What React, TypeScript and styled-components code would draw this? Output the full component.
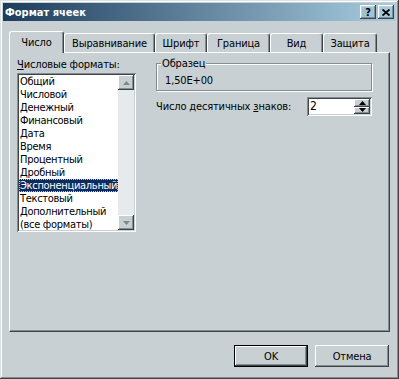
import styled, { createGlobalStyle, css } from 'styled-components';

const face = '#c8d0d4';
const light = '#ffffff';
const shadow = '#848c94';
const dark = '#3c4448';

const GlobalStyle = createGlobalStyle`
  html, body { margin: 0; padding: 0; background: ${face}; }
  body {
    font-family: "DejaVu Sans Condensed", "Liberation Sans", sans-serif;
    font-size: 11px;
    letter-spacing: -0.15px;
    color: #000;
  }
  * { box-sizing: border-box; }
`;

const raised = css`
  box-shadow: inset -1px -1px ${dark}, inset 1px 1px ${light},
    inset -2px -2px ${shadow}, inset 2px 2px ${face};
`;

const sunken = css`
  box-shadow: inset 1px 1px ${shadow}, inset -1px -1px ${light},
    inset 2px 2px ${dark}, inset -2px -2px ${face};
`;

const Window = styled.div`
  width: 399px;
  height: 379px;
  padding: 3px;
  display: flex;
  flex-direction: column;
  background: ${face};
  box-shadow: inset -1px -1px #404448, inset 1px 1px #dde2e5,
    inset -2px -2px ${shadow}, inset 2px 2px ${light};
`;

const TitleBar = styled.div`
  height: 18px;
  display: flex;
  align-items: center;
  justify-content: space-between;
  padding: 0 2px;
  background: linear-gradient(to right, #1d3c5c, #a8cde0);
  color: #fff;
  font-weight: bold;
  letter-spacing: 0;
`;

const TitleButtons = styled.div`
  display: flex;
  gap: 2px;
`;

const TitleButton = styled.div`
  width: 16px;
  height: 14px;
  display: flex;
  align-items: center;
  justify-content: center;
  color: #000;
  font-weight: bold;
  font-size: 11px;
  ${raised};
`;

const Body = styled.div`
  flex: 1;
  display: flex;
  flex-direction: column;
  padding: 10px 6px 0 6px;
`;

const TabRow = styled.div`
  display: flex;
  align-items: flex-end;
  height: 22px;
  margin-bottom: -1px;
  position: relative;
  z-index: 1;
`;

const Tab = styled.div<{ $w: number; $active?: boolean }>`
  width: ${(p) => p.$w}px;
  height: ${(p) => (p.$active ? 22 : 19)}px;
  margin-bottom: ${(p) => (p.$active ? 0 : 1)}px;
  padding-bottom: ${(p) => (p.$active ? 1 : 0)}px;
  display: flex;
  align-items: center;
  justify-content: center;
  background: ${face};
  border-top: 1px solid ${light};
  border-left: 1px solid ${light};
  border-right: 1px solid ${dark};
  border-radius: 3px 3px 0 0;
  box-shadow: inset -1px 0 ${shadow};
  white-space: nowrap;
`;

const Panel = styled.div`
  height: 280px;
  display: flex;
  align-items: flex-start;
  gap: 20px;
  padding: 5px 7px;
  border-top: 1px solid ${light};
  border-left: 1px solid ${light};
  border-right: 1px solid ${dark};
  border-bottom: 1px solid ${dark};
  box-shadow: inset -1px -1px ${shadow};
`;

const LeftCol = styled.div`
  width: 119px;
  display: flex;
  flex-direction: column;
  gap: 2px;
`;

const Label = styled.div`
  line-height: 13px;
  height: 13px;
  white-space: nowrap;
`;

const ListBox = styled.div`
  height: 159px;
  padding: 2px;
  display: flex;
  background: #fff;
  ${sunken};
`;

const Items = styled.div`
  flex: 1;
  overflow: hidden;
`;

const Item = styled.div<{ $selected?: boolean }>`
  height: 13px;
  line-height: 13px;
  padding-left: 1px;
  letter-spacing: -0.3px;
  white-space: nowrap;
  background: ${(p) => (p.$selected ? '#0f2a5c' : 'transparent')};
  color: ${(p) => (p.$selected ? '#fff' : '#000')};
  outline: ${(p) => (p.$selected ? '1px dotted #d8c88c' : 'none')};
  outline-offset: -1px;
`;

const ScrollBar = styled.div`
  width: 16px;
  display: flex;
  flex-direction: column;
  justify-content: space-between;
  background: #e6eaec;
`;

const ArrowButton = styled.div<{ $h: number }>`
  height: ${(p) => p.$h}px;
  display: flex;
  align-items: center;
  justify-content: center;
  background: ${face};
  ${raised};
`;

const RightCol = styled.div`
  width: 216px;
  display: flex;
  flex-direction: column;
  gap: 6px;
`;

const Group = styled.fieldset`
  margin: -1px 0 0 0;
  padding: 0 0 3px 8px;
  border: 1px solid ${shadow};
  box-shadow: 1px 1px 0 ${light}, inset 1px 1px 0 ${light};
  min-width: 0;
`;

const Legend = styled.legend`
  margin-left: -4px;
  padding: 0 1px;
  line-height: 13px;
  background: ${face};
`;

const SampleValue = styled.div`
  padding-top: 4px;
  line-height: 13px;
`;

const SpinRow = styled.div`
  display: flex;
  align-items: center;
  justify-content: space-between;
  height: 19px;
`;

const SpinBox = styled.div`
  width: 65px;
  height: 19px;
  padding: 2px;
  display: flex;
  background: #fff;
  ${sunken};
`;

const SpinValue = styled.div`
  flex: 1;
  padding-left: 1px;
  line-height: 15px;
  font-size: 12px;
`;

const SpinButtons = styled.div`
  width: 16px;
  display: flex;
  flex-direction: column;
`;

const SpinButton = styled.div`
  flex: 1;
  display: flex;
  align-items: center;
  justify-content: center;
  background: ${face};
  ${raised};
`;

const Footer = styled.div`
  display: flex;
  justify-content: flex-end;
  gap: 7px;
  margin-top: 13px;
  padding-right: 1px;
`;

const Button = styled.div<{ $default?: boolean }>`
  width: 74px;
  height: 22px;
  display: flex;
  align-items: center;
  justify-content: center;
  background: ${face};
  ${(p) =>
    p.$default
      ? css`
          border: 1px solid #000;
          box-shadow: inset -1px -1px ${dark}, inset 1px 1px ${light},
            inset -2px -2px ${shadow};
        `
      : raised};
`;

const Tri = ({ up, color }: { up: boolean; color: string }) => (
  <svg width="7" height="4" viewBox="0 0 7 4">
    <path d={up ? 'M3.5 0 L7 4 L0 4 Z' : 'M0 0 L7 0 L3.5 4 Z'} fill={color} />
  </svg>
);

const formats = [
  'Общий',
  'Числовой',
  'Денежный',
  'Финансовый',
  'Дата',
  'Время',
  'Процентный',
  'Дробный',
  'Экспоненциальный',
  'Текстовый',
  'Дополнительный',
  '(все форматы)',
];

const tabs = [
  { name: 'Число', w: 55 },
  { name: 'Выравнивание', w: 91 },
  { name: 'Шрифт', w: 52 },
  { name: 'Граница', w: 63 },
  { name: 'Вид', w: 53 },
  { name: 'Защита', w: 54 },
];

export default function App() {
  return (
    <>
      <GlobalStyle />
      <Window>
        <TitleBar>
          <span>Формат ячеек</span>
          <TitleButtons>
            <TitleButton>?</TitleButton>
            <TitleButton>
              <svg width="8" height="7" viewBox="0 0 8 7">
                <path d="M0.5 0.5 L7.5 6.5 M7.5 0.5 L0.5 6.5" stroke="#000" strokeWidth="1.8" />
              </svg>
            </TitleButton>
          </TitleButtons>
        </TitleBar>
        <Body>
          <TabRow>
            {tabs.map((t, i) => (
              <Tab key={t.name} $w={t.w} $active={i === 0}>
                {t.name}
              </Tab>
            ))}
          </TabRow>
          <Panel>
            <LeftCol>
              <Label>
                <u>Ч</u>исловые форматы:
              </Label>
              <ListBox>
                <Items>
                  {formats.map((f) => (
                    <Item key={f} $selected={f === 'Экспоненциальный'}>
                      {f}
                    </Item>
                  ))}
                </Items>
                <ScrollBar>
                  <ArrowButton $h={15}>
                    <Tri up color="#7c8890" />
                  </ArrowButton>
                  <ArrowButton $h={15}>
                    <Tri up={false} color="#7c8890" />
                  </ArrowButton>
                </ScrollBar>
              </ListBox>
            </LeftCol>
            <RightCol>
              <Group>
                <Legend>Образец</Legend>
                <SampleValue>1,50E+00</SampleValue>
              </Group>
              <SpinRow>
                <Label>
                  Число десятичных <u>з</u>наков:
                </Label>
                <SpinBox>
                  <SpinValue>2</SpinValue>
                  <SpinButtons>
                    <SpinButton>
                      <Tri up color="#000" />
                    </SpinButton>
                    <SpinButton>
                      <Tri up={false} color="#000" />
                    </SpinButton>
                  </SpinButtons>
                </SpinBox>
              </SpinRow>
            </RightCol>
          </Panel>
          <Footer>
            <Button $default>OK</Button>
            <Button>Отмена</Button>
          </Footer>
        </Body>
      </Window>
    </>
  );
}
